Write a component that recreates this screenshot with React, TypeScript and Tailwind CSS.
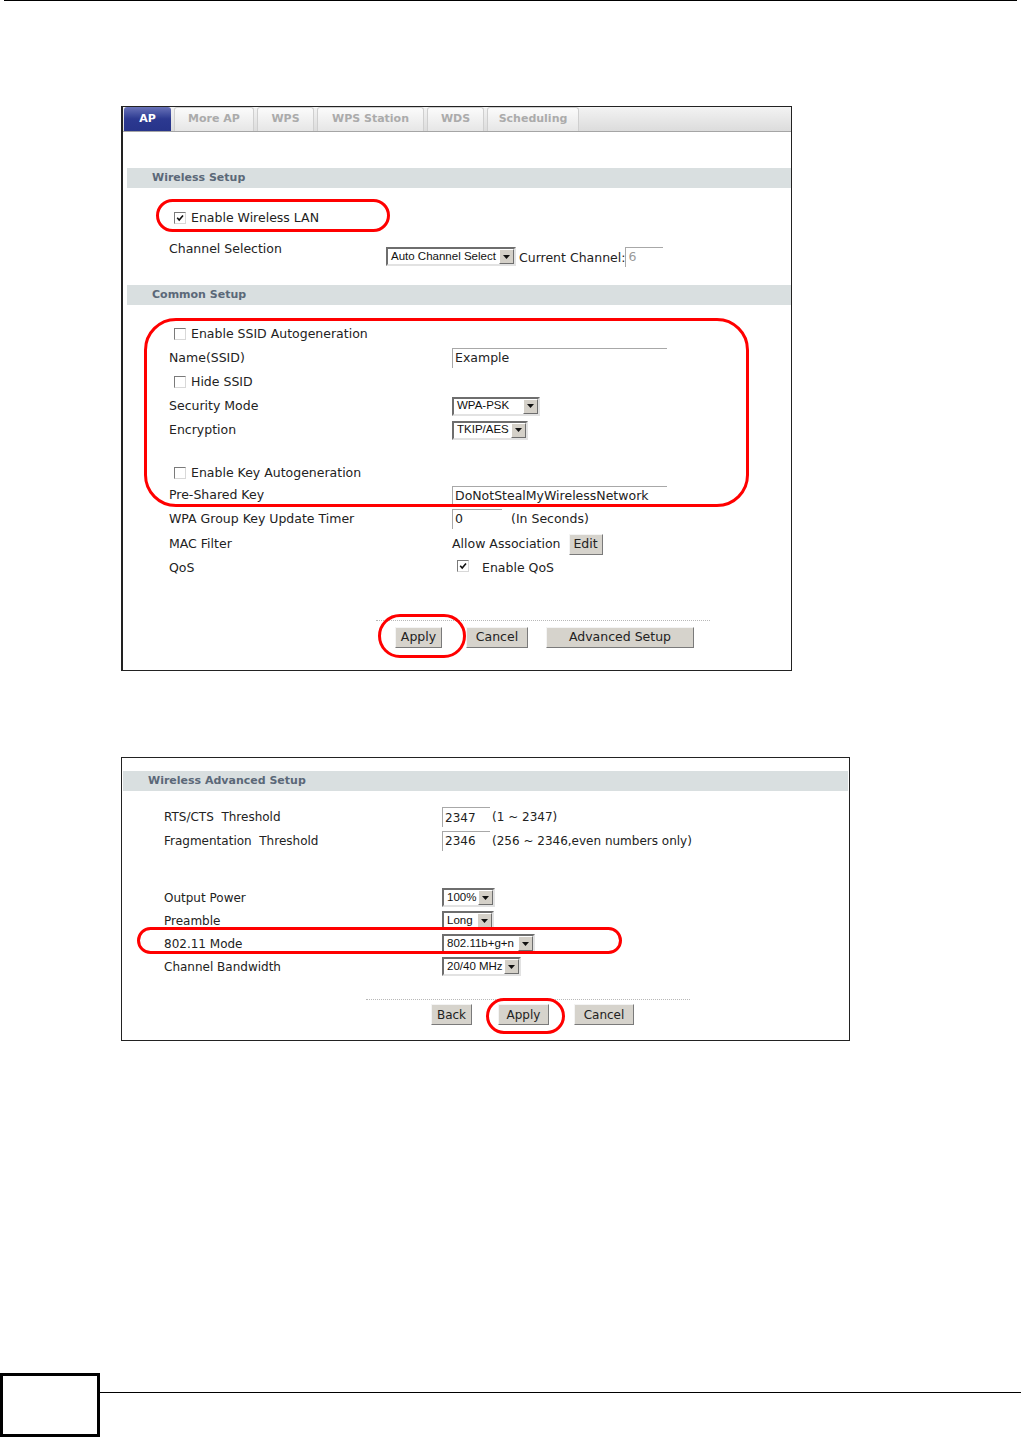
import React from "react";

const FONT = { fontFamily: '"DejaVu Sans", Verdana, sans-serif' };
const ARIAL = { fontFamily: '"Liberation Sans", Arial, sans-serif' };

const Check = ({ checked = false }: { checked?: boolean }) => (
  <span className="relative inline-block w-[12px] h-[12px] shrink-0 border border-t-[#7a7a7a] border-l-[#7a7a7a] border-r-[#d8d8d8] border-b-[#d8d8d8] bg-white">
    {checked && (
      <svg viewBox="0 0 10 10" className="absolute inset-0 w-full h-full">
        <path d="M2.2 4.8 L4.2 7 L8 2.6" stroke="#111" strokeWidth="1.6" fill="none" />
      </svg>
    )}
  </span>
);

const Select = ({ text, w }: { text: string; w: string }) => (
  <div
    className={`flex items-center h-[19px] ${w} border-2 border-t-[#6e6e6e] border-l-[#6e6e6e] border-r-[#e2e2e2] border-b-[#e2e2e2] bg-white`}
  >
    <span className="flex-1 pl-[3px] text-[11.5px] text-[#111] leading-none whitespace-nowrap" style={ARIAL}>
      {text}
    </span>
    <span className="flex items-center justify-center w-[15px] h-[15px] bg-[#d4d0c8] border border-t-white border-l-white border-r-[#6e6e6e] border-b-[#6e6e6e]">
      <svg viewBox="0 0 7 4" className="w-[7px] h-[4px]">
        <path d="M0 0 H7 L3.5 4 Z" fill="#111" />
      </svg>
    </span>
  </div>
);

const Input = ({ value, w, muted = false }: { value: string; w: string; muted?: boolean }) => (
  <div
    className={`flex items-center h-[20px] ${w} border-t border-l border-[#a8a8a8] pl-[2px] ${
      muted ? "text-[#9a9a9a]" : "text-[#222]"
    } whitespace-nowrap`}
  >
    {value}
  </div>
);

const Button = ({ label, w }: { label: string; w: string }) => (
  <div
    className={`flex items-center justify-center h-[21px] ${w} bg-[#d6d3cc] border border-t-[#f4f4f4] border-l-[#f4f4f4] border-r-[#7a7a7a] border-b-[#7a7a7a] text-[#222]`}
  >
    {label}
  </div>
);

const Tab = ({ label, w, active = false }: { label: string; w: string; active?: boolean }) => (
  <div
    className={`flex items-center justify-center ${w} h-[24px] rounded-t-[3px] text-[11px] font-bold ${
      active
        ? "bg-gradient-to-b from-[#6a72b8] via-[#2c3990] to-[#27348a] text-white"
        : "bg-gradient-to-b from-[#fbfbfb] to-[#e6e6e6] text-[#ababab] border border-b-0 border-[#cfcfcf]"
    }`}
  >
    {label}
  </div>
);

const Header = ({ title }: { title: string }) => (
  <div className="h-[20px] flex items-center bg-[#d9dfe0] text-[11px] font-bold text-[#5b6878]">
    {title}
  </div>
);

const Row = ({
  h,
  label,
  children,
  check,
  lw = "w-[283px]",
}: {
  h: string;
  label?: string;
  children?: React.ReactNode;
  check?: boolean;
  lw?: string;
}) => (
  <div className={`flex items-center ${h}`}>
    {check !== undefined ? (
      <div className={`${lw} pl-[5px] flex items-center gap-[5px]`}>
        <Check checked={check} />
        <span>{label}</span>
      </div>
    ) : (
      <div className={`${lw} whitespace-pre`}>{label}</div>
    )}
    <div className="flex items-center">{children}</div>
  </div>
);

const Oval = ({ cls }: { cls: string }) => (
  <div className={`absolute border-[3px] border-[#ff0000] pointer-events-none ${cls}`} />
);

export default function App() {
  return (
    <div className="relative flex flex-col min-h-[1437px] bg-white text-[12.5px] text-[#222]" style={FONT}>
      <div className="mx-[4px] border-t border-black" />

      {/* AP panel */}
      <div className="relative ml-[121px] mt-[105px] w-[671px] h-[565px] border border-l-2 border-[#222]">
        <div className="flex items-end h-[25px] gap-[3px] pl-px bg-gradient-to-b from-[#f3f3f3] to-[#dcdcdc] border-b border-[#a5a5a5]">
          <Tab label="AP" w="w-[47px]" active />
          <Tab label="More AP" w="w-[80px]" />
          <Tab label="WPS" w="w-[57px]" />
          <Tab label="WPS Station" w="w-[107px]" />
          <Tab label="WDS" w="w-[57px]" />
          <Tab label="Scheduling" w="w-[92px]" />
        </div>

        <div className="pl-[4px] mt-[36px]">
          <div className="pl-[25px] bg-[#d9dfe0]">
            <Header title="Wireless Setup" />
          </div>
        </div>

        <div className="pl-[46px]">
          <div className="mt-[18px]">
            <Row h="h-[24px]" label="Enable Wireless LAN" check={true} />
          </div>
          <div className="flex items-start h-[28px] mt-[11px]">
            <div className="w-[217px] leading-[16px]">Channel Selection</div>
            <div className="flex items-center mt-[5px]">
              <Select text="Auto Channel Select" w="w-[130px]" />
              <span className="ml-[3px] mt-[3px]">Current Channel:</span>
              <Input value="6" w="w-[38px]" muted />
            </div>
          </div>
        </div>

        <div className="pl-[4px] mt-[16px]">
          <div className="pl-[25px] bg-[#d9dfe0]">
            <Header title="Common Setup" />
          </div>
        </div>

        <div className="pl-[46px] mt-[17px]">
          <Row h="h-[24px]" label="Enable SSID Autogeneration" check={false} />
          <Row h="h-[24px]" label="Name(SSID)">
            <Input value="Example" w="w-[215px]" />
          </Row>
          <Row h="h-[24px]" label="Hide SSID" check={false} />
          <Row h="h-[24px]" label="Security Mode">
            <Select text="WPA-PSK" w="w-[88px]" />
          </Row>
          <Row h="h-[24px]" label="Encryption">
            <Select text="TKIP/AES" w="w-[76px]" />
          </Row>
          <div className="h-[19px]" />
          <Row h="h-[24px]" label="Enable Key Autogeneration" check={false} />
          <Row h="h-[21px]" label="Pre-Shared Key">
            <Input value="DoNotStealMyWirelessNetwork" w="w-[215px]" />
          </Row>
          <Row h="h-[26px]" label="WPA Group Key Update Timer">
            <Input value="0" w="w-[50px]" />
            <span className="ml-[9px]">(In Seconds)</span>
          </Row>
          <Row h="h-[24px]" label="MAC Filter">
            <span>Allow Association</span>
            <div className="ml-[8px]">
              <Button label="Edit" w="w-[34px]" />
            </div>
          </Row>
          <Row h="h-[24px]" label="QoS">
            <span className="ml-[5px]">
              <Check checked />
            </span>
            <span className="ml-[13px]">Enable QoS</span>
          </Row>
        </div>

        <div className="ml-[253px] mt-[40px] w-[334px] border-t border-dotted border-[#b8b8b8]" />
        <div className="flex mt-[6px] pl-[272px]">
          <Button label="Apply" w="w-[47px]" />
          <div className="ml-[24px]">
            <Button label="Cancel" w="w-[62px]" />
          </div>
          <div className="ml-[18px]">
            <Button label="Advanced Setup" w="w-[148px]" />
          </div>
        </div>

        <Oval cls="left-[33px] top-[92px] w-[234px] h-[33px] rounded-full" />
        <Oval cls="left-[21px] top-[211px] w-[605px] h-[189px] rounded-[32px]" />
        <Oval cls="left-[255px] top-[507px] w-[88px] h-[44px] rounded-[22px]" />
      </div>

      {/* Advanced panel */}
      <div className="relative ml-[121px] mt-[86px] w-[729px] h-[284px] border border-[#222] text-[12px]">
        <div className="mx-px mt-[13px] pl-[25px] bg-[#d9dfe0]">
          <Header title="Wireless Advanced Setup" />
        </div>

        <div className="pl-[42px] mt-[14px]">
          <Row h="h-[24px]" lw="w-[278px]" label="RTS/CTS  Threshold">
            <Input value="2347" w="w-[48px]" />
            <span className="ml-[2px]">(1 ~ 2347)</span>
          </Row>
          <Row h="h-[23px]" lw="w-[278px]" label="Fragmentation  Threshold">
            <Input value="2346" w="w-[48px]" />
            <span className="ml-[2px]">(256 ~ 2346,even numbers only)</span>
          </Row>
          <div className="h-[34px]" />
          <Row h="h-[23px]" lw="w-[278px]" label="Output Power">
            <Select text="100%" w="w-[53px]" />
          </Row>
          <Row h="h-[23px]" lw="w-[278px]" label="Preamble">
            <Select text="Long" w="w-[52px]" />
          </Row>
          <Row h="h-[23px]" lw="w-[278px]" label="802.11 Mode">
            <Select text="802.11b+g+n" w="w-[93px]" />
          </Row>
          <Row h="h-[23px]" lw="w-[278px]" label="Channel Bandwidth">
            <Select text="20/40 MHz" w="w-[79px]" />
          </Row>
        </div>

        <div className="ml-[244px] mt-[21px] w-[324px] border-t border-dotted border-[#b8b8b8]" />
        <div className="flex mt-[4px] pl-[309px]">
          <Button label="Back" w="w-[41px]" />
          <div className="ml-[26px]">
            <Button label="Apply" w="w-[51px]" />
          </div>
          <div className="ml-[25px]">
            <Button label="Cancel" w="w-[60px]" />
          </div>
        </div>

        <Oval cls="left-[15px] top-[169px] w-[485px] h-[27px] rounded-full" />
        <Oval cls="left-[364px] top-[240px] w-[79px] h-[36px] rounded-[18px]" />
      </div>

      <div className="flex-1" />

      {/* page footer */}
      <div className="flex h-[64px]">
        <div className="w-[100px] h-full border-[3px] border-black" />
        <div className="flex-1 mt-[19px] border-t border-black" />
      </div>
    </div>
  );
}
